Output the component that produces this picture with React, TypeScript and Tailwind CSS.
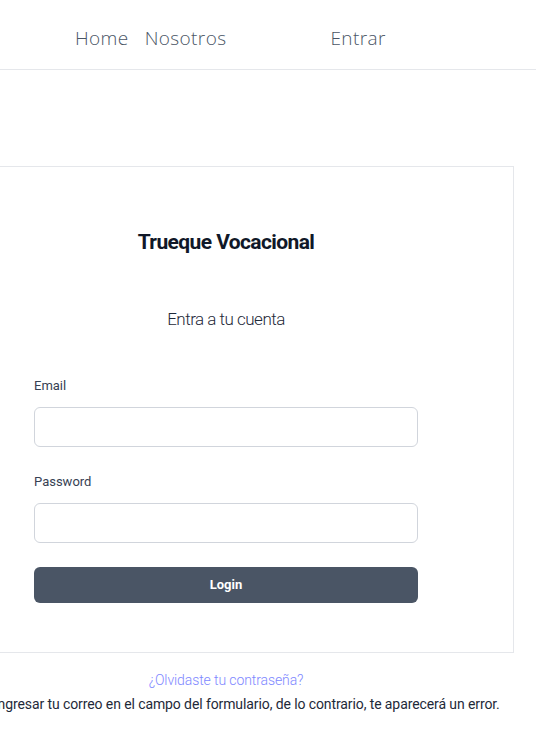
import React from "react";

const body = "font-['Roboto',sans-serif]";

export default function App() {
  return (
    <div className="min-h-screen bg-white">
      {/* Header */}
      <header className="h-[70px] border-b border-gray-200 flex items-center pt-[7px] font-['Open_Sans',sans-serif] font-light text-[19px] tracking-[0.4px] text-gray-600">
        <nav className="flex items-center pl-[75px] gap-[16px]">
          <a href="#">Home</a>
          <a href="#">Nosotros</a>
        </nav>
        <a href="#" className="ml-[104px]">Entrar</a>
      </header>

      <main className={`w-[452px] flex flex-col items-center pt-[96px] ${body}`}>
        <div className="w-[576px] shrink-0 border border-gray-200 flex flex-col items-center pt-[61px] pb-[49px]">
          <h1 className="text-[21px] leading-[28px] font-bold tracking-[-0.6px] text-gray-900">Trueque Vocacional</h1>
          <h2 className="mt-[51px] text-[17px] leading-[24px] font-light tracking-[-0.5px] text-gray-800">Entra a tu cuenta</h2>
          <form className="w-[384px] mt-[45px] flex flex-col">
            <label className="text-[13px] leading-[20px] text-gray-700">Email</label>
            <input type="email" className="mt-[11px] h-[40px] rounded-md border border-gray-300 px-3" />
            <label className="mt-[25px] text-[13px] leading-[20px] text-gray-700">Password</label>
            <input type="password" className="mt-[11px] h-[40px] rounded-md border border-gray-300 px-3" />
            <button type="button" className="mt-[24px] h-[36px] rounded-md bg-gray-600 text-white text-[13px] font-bold">
              Login
            </button>
          </form>
        </div>
        <a href="#" className="mt-[17px] text-[14px] leading-[20px] tracking-[-0.1px] font-light text-indigo-400">
          ¿Olvidaste tu contraseña?
        </a>
        <p className="mt-[4px] whitespace-nowrap text-center text-[14px] leading-[20px] tracking-[-0.1px] text-gray-800">
          Debes ingresar tu correo en el campo del formulario, de lo contrario, te aparecerá un error.
        </p>
      </main>
    </div>
  );
}
